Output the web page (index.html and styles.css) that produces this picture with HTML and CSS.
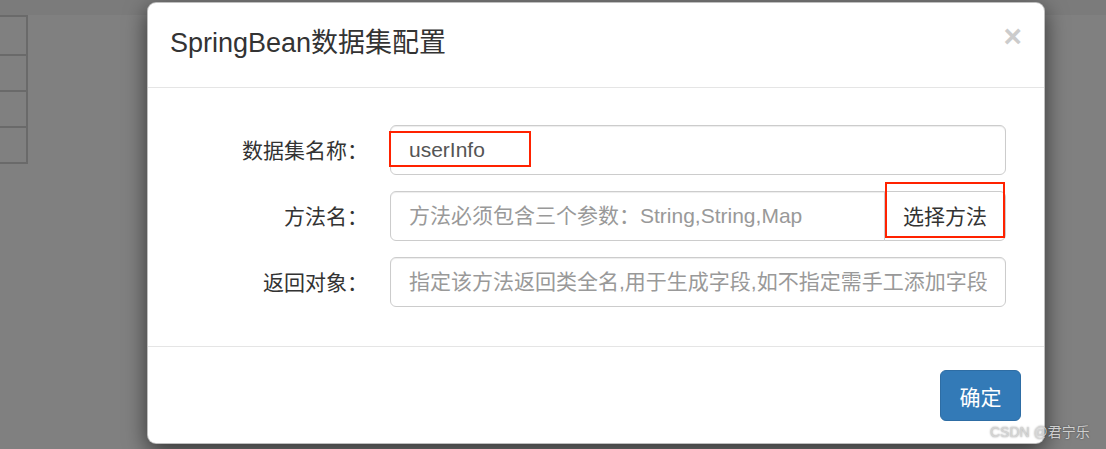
FILE: index.html
```html
<!DOCTYPE html>
<html lang="zh-CN">
<head>
<meta charset="utf-8">
<title>SpringBean数据集配置</title>
<link rel="stylesheet" href="styles.css">
</head>
<body>
<div class="page">
  <div class="topbar"></div>
  <div class="side-table">
    <div class="side-row first"></div>
    <div class="side-row"></div>
    <div class="side-row"></div>
    <div class="side-row"></div>
  </div>
  <div class="list-table">
    <div class="list-cell"></div>
    <div class="list-cell"></div>
  </div>
</div>

<div class="modal">
  <div class="modal-header">
    <h4 class="modal-title">SpringBean数据集配置</h4>
    <button class="close" type="button">×</button>
  </div>
  <div class="modal-body">
    <div class="form-grid">
      <label class="control-label">数据集名称：</label>
      <div class="field-wrap">
        <input class="form-control" type="text" value="userInfo">
        <span class="mark mark-name"></span>
      </div>

      <label class="control-label">方法名：</label>
      <div class="input-group">
        <input class="form-control group-input" type="text" placeholder="方法必须包含三个参数：String,String,Map">
        <div class="group-btn">
          <button class="btn-default" type="button">选择方法</button>
          <span class="mark mark-btn"></span>
        </div>
      </div>

      <label class="control-label">返回对象：</label>
      <div class="field-wrap">
        <input class="form-control" type="text" placeholder="指定该方法返回类全名,用于生成字段,如不指定需手工添加字段">
      </div>
    </div>
  </div>
  <div class="modal-footer">
    <button class="btn-primary" type="button">确定</button>
  </div>
</div>

<div class="watermark">CSDN @君宁乐</div>
</body>
</html>
```

FILE: styles.css
```css
html, body {
  margin: 0;
  padding: 0;
  height: 100%;
  overflow: hidden;
}

body {
  background: #808080;
  font-family: "Liberation Sans", "Noto Sans CJK SC", sans-serif;
  color: #333;
}

.page {
  display: flex;
  flex-direction: column;
}

.topbar {
  height: 15px;
  background: #7b7b7b;
}

.side-table {
  width: 28px;
  display: flex;
  flex-direction: column;
}

.side-row {
  height: 34px;
  border-right: 2px solid #6a6a6a;
  border-bottom: 2px solid #6a6a6a;
}

.side-row.first {
  height: 37px;
  border-top: 2px solid #6a6a6a;
}

.list-table {
  display: flex;
  margin-top: 236px;
  margin-left: 221px;
  height: 40px;
}

.list-cell {
  width: 158px;
  border-left: 1px solid #555;
}

/* modal */
.modal {
  position: absolute;
  left: 147px;
  top: 2px;
  width: 898px;
  box-sizing: border-box;
  background: #fff;
  border: 1px solid rgba(0, 0, 0, 0.25);
  border-radius: 9px;
  box-shadow: 0 7px 22px rgba(0, 0, 0, 0.6);
}

.modal-header {
  box-sizing: border-box;
  height: 85px;
  padding: 21px 22px 0 22px;
  border-bottom: 1px solid #e5e5e5;
  display: flex;
  justify-content: space-between;
  align-items: flex-start;
}

.modal-title {
  margin: 0;
  font-size: 27px;
  line-height: 38px;
  font-weight: normal;
  color: #333;
}

.close {
  margin-top: -3px;
  padding: 0;
  border: 0;
  background: transparent;
  font-family: "Liberation Sans", sans-serif;
  font-size: 31.5px;
  line-height: 1;
  font-weight: bold;
  color: #cccccc;
  cursor: pointer;
}

.modal-body {
  padding: 37px 38px 39px 20px;
}

.form-grid {
  display: grid;
  grid-template-columns: 1fr 616px;
  column-gap: 22px;
  row-gap: 16px;
  align-items: center;
}

.control-label {
  text-align: right;
  font-size: 21px;
  line-height: 30px;
  color: #333;
  padding-top: 2px;
}

.field-wrap {
  position: relative;
  display: flex;
}

.form-control {
  box-sizing: border-box;
  width: 100%;
  height: 50px;
  margin: 0;
  padding: 0 18px;
  border: 1px solid #ccc;
  border-radius: 6px;
  box-shadow: inset 0 1px 1px rgba(0, 0, 0, 0.075);
  font-family: "Liberation Sans", "Noto Sans CJK SC", sans-serif;
  font-size: 21px;
  color: #555;
  background: #fff;
  outline: none;
}

.form-control::placeholder {
  color: #999;
  opacity: 1;
}

.input-group {
  display: flex;
}

.group-input {
  flex: 1;
  min-width: 0;
  border-top-right-radius: 0;
  border-bottom-right-radius: 0;
}

.group-btn {
  position: relative;
  display: flex;
}

.btn-default {
  box-sizing: border-box;
  width: 122px;
  height: 50px;
  margin-left: -1px;
  padding: 0 0 2px 0;
  border: 1px solid #ccc;
  border-radius: 0 6px 6px 0;
  background: #fff;
  color: #333;
  font-family: "Liberation Sans", "Noto Sans CJK SC", sans-serif;
  font-size: 21px;
}

/* red annotation boxes */
.mark {
  position: absolute;
  border: 2px solid #ff2200;
  box-sizing: border-box;
  pointer-events: none;
}

.mark-name {
  left: -1px;
  top: 6px;
  width: 142px;
  height: 36px;
}

.mark-btn {
  left: 0;
  top: -9px;
  width: 120px;
  height: 56px;
}

.modal-footer {
  display: flex;
  justify-content: flex-end;
  padding: 23px 23px 22px 23px;
  border-top: 1px solid #e5e5e5;
}

.btn-primary {
  box-sizing: border-box;
  width: 81px;
  height: 51px;
  padding: 0;
  border: 1px solid #2e6da4;
  border-radius: 6px;
  background: #337ab7;
  color: #fff;
  font-family: "Liberation Sans", "Noto Sans CJK SC", sans-serif;
  font-size: 21px;
}

.watermark {
  position: absolute;
  left: 990px;
  top: 423px;
  font-size: 14px;
  line-height: 18px;
  color: rgba(215, 215, 215, 0.95);
  text-shadow: 0 0 2px rgba(0, 0, 0, 0.45);
  white-space: nowrap;
}
```
